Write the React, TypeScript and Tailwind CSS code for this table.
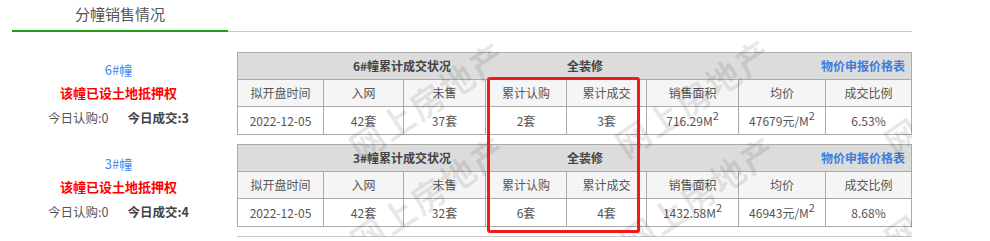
// building sales panel: per-building summary on the left, sales tables on the right
const COLS = ["拟开盘时间", "入网", "未售", "累计认购", "累计成交", "销售面积", "均价", "成交比例"];

type Building = {
  name: string;
  todaySub: number;
  todayDeal: number;
  date: string;
  online: string;
  unsold: string;
  sub: string;
  deal: string;
  area: string;
  price: string;
  ratio: string;
};

const BUILDINGS: Building[] = [
  {
    name: "6#幢",
    todaySub: 0,
    todayDeal: 3,
    date: "2022-12-05",
    online: "42套",
    unsold: "37套",
    sub: "2套",
    deal: "3套",
    area: "716.29",
    price: "47679",
    ratio: "6.53%",
  },
  {
    name: "3#幢",
    todaySub: 0,
    todayDeal: 4,
    date: "2022-12-05",
    online: "42套",
    unsold: "32套",
    sub: "6套",
    deal: "4套",
    area: "1432.58",
    price: "46943",
    ratio: "8.68%",
  },
];

// watermark centres, relative to the right column
const MARKS = [
  { l: "left-[190px]", t: "top-[68px]" },
  { l: "left-[191px]", t: "top-[162px]" },
  { l: "left-[456px]", t: "top-[65px]" },
  { l: "left-[461px]", t: "top-[162px]" },
  { l: "left-[725px]", t: "top-[63px]" },
  { l: "left-[725px]", t: "top-[160px]" },
];

export default function App() {
  return (
    <div className="relative w-[990px] h-[241px] bg-white font-['Noto_Sans_CJK_SC','Noto_Sans',sans-serif] text-[#555] overflow-hidden">
      {/* tab bar */}
      <div className="ml-[12px] w-[900px] h-[32px] flex">
        <div className="w-[216px] h-full border-b-2 border-[#1e9e10] flex items-center justify-center pb-[2px] text-[15px] text-[#555]">
          分幢销售情况
        </div>
        <div className="flex-1 h-full border-b border-[#c8c8c8]" />
      </div>

      <div className="flex">
        <div className="w-[237px] pt-[20px] flex flex-col gap-[9px]">
          {BUILDINGS.map((b) => (
            <BuildingInfo key={b.name} b={b} />
          ))}
        </div>

        <div className="relative w-[675px] pt-[20px] overflow-hidden">
          <div className="flex flex-col gap-[9px]">
            {BUILDINGS.map((b) => (
              <SalesTable key={b.name} b={b} />
            ))}
          </div>
          <div className="mt-[9px] h-px bg-[#c8c8c8]" />

          {/* watermark layer */}
          {MARKS.map((m, i) => (
            <div
              key={i}
              className={`pointer-events-none absolute ${m.l} ${m.t} -translate-x-1/2 -translate-y-1/2 rotate-[-34deg] whitespace-nowrap text-[34px] font-semibold tracking-[2px] text-black/[0.09]`}
            >
              网上房地产
            </div>
          ))}
        </div>
      </div>

      {/* red highlight box */}
      <div className="pointer-events-none absolute left-[487px] top-[77px] w-[153px] h-[156px] border-[3px] border-[#f2191b] rounded-[3px]" />
    </div>
  );
}

function BuildingInfo({ b }: { b: Building }) {
  return (
    <div className="h-[85px] flex flex-col items-center justify-center">
      <div className="leading-[22px] text-[13px] text-[#4a86e8]">{b.name}</div>
      <div className="leading-[24px] text-[13px] font-bold text-[#ff0000]">该幢已设土地抵押权</div>
      <div className="leading-[26px] text-[12.5px] flex gap-[19px]">
        <span className="text-[#555]">今日认购:{b.todaySub}</span>
        <span className="font-bold text-[#444]">今日成交:{b.todayDeal}</span>
      </div>
    </div>
  );
}

function SalesTable({ b }: { b: Building }) {
  const values = [
    b.date,
    b.online,
    b.unsold,
    b.sub,
    b.deal,
    <>
      {b.area}M<sup className="text-[11px]">2</sup>
    </>,
    <>
      {b.price}元/M<sup className="text-[11px]">2</sup>
    </>,
    b.ratio,
  ];
  return (
    <div className="border border-[#aaa] text-[12px]">
      <div className="h-[27px] bg-[#dcdcdc] border-b border-[#aaa] flex items-center font-bold text-[#444]">
        <div className="w-[328px] text-center">{b.name}累计成交状况</div>
        <div className="pl-[1px]">全装修</div>
        <div className="flex-1 text-right pr-[6px] text-[#3b7ddd]">物价申报价格表</div>
      </div>
      <div className="h-[27px] bg-[#f5f5f5] border-b border-[#aaa] grid grid-cols-[86px_80px_82px_81px_80px_92px_87px_85px]">
        {COLS.map((c, i) => (
          <div key={c} className={`flex items-center justify-center ${i < 7 ? "border-r border-[#aaa]" : ""}`}>
            {c}
          </div>
        ))}
      </div>
      <div className="h-[27px] bg-white grid grid-cols-[86px_80px_82px_81px_80px_92px_87px_85px]">
        {values.map((v, i) => (
          <div key={i} className={`flex items-center justify-center ${i < 7 ? "border-r border-[#aaa]" : ""}`}>
            <span>{v}</span>
          </div>
        ))}
      </div>
    </div>
  );
}
